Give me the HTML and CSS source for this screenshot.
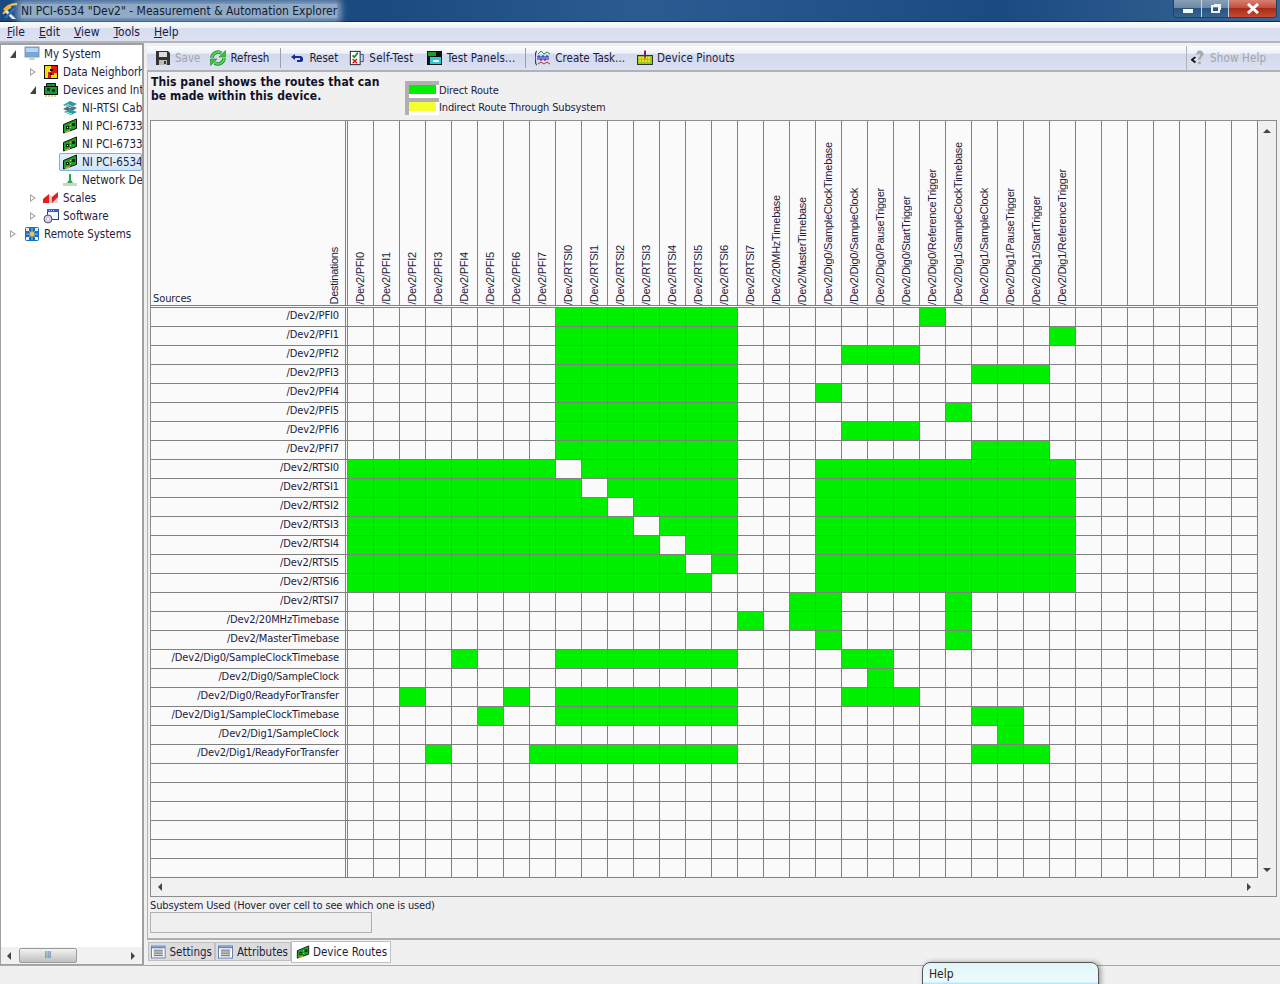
FILE: index.html
```html
<!DOCTYPE html>
<html lang="en">
<head>
<meta charset="UTF-8" />
<title>NI PCI-6534 "Dev2" - Measurement &amp; Automation Explorer</title>
<link rel="stylesheet" href="styles.css">
</head>
<body>
<svg class="defs" width="0" height="0">
  <symbol id="i-card" viewBox="0 0 16 16">
    <path d="M1.500 15V6.500L14.500 1v9.500z" fill="#17a02c" stroke="#111"/>
    <path d="M3 14.500l5-2" stroke="#e0a020" stroke-width="1.600"/>
    <path d="M4 8h3v3H4zM10 5h3v3h-3z" fill="#0c2c10"/>
    <path d="M8 9h1v1H8zM8 6h1v1H8zM5 9h1v1H5z" fill="#f0e020"/>
  </symbol>
</svg>

<div class="titlebar">
  <svg class="app-icon" width="18" height="18" viewBox="0 0 18 18">
    <path d="M2 8C5 4 9 2 15 2" stroke="#f0b840" stroke-width="2.500" fill="none"/>
    <path d="M1 12C4 8 6 6 9 5" stroke="#f0b840" stroke-width="2" fill="none"/>
    <path d="M5 8l9 9h-4L3 10z" fill="#dfe8f2"/>
    <path d="M11 6L2 16h3l8-9z" fill="#2f6fb0"/>
  </svg>
  <span class="title-text">NI PCI-6534 "Dev2" - Measurement &amp; Automation Explorer</span>
  <div class="win-btns">
    <div class="win-btn win-min"><span class="glyph-min"></span></div>
    <div class="win-btn"><span class="glyph-max"></span></div>
    <div class="win-btn win-close">
      <svg width="14" height="11" viewBox="0 0 14 11"><path d="M2 1l10 9M12 1 2 10" stroke="#fff" stroke-width="3"/></svg>
    </div>
  </div>
</div>

<div class="menubar">
  <span><u>F</u>ile</span>
  <span><u>E</u>dit</span>
  <span><u>V</u>iew</span>
  <span><u>T</u>ools</span>
  <span><u>H</u>elp</span>
</div>

<div class="main">
  <div class="tree-pane">
    <div class="tree">
      <div class="node lvl0"><span class="tw open"></span>
        <svg class="ico" viewBox="0 0 16 16"><rect x="1" y="1" width="14" height="10" fill="#6ea8dc" stroke="#8a9aaa"/><path d="M2 2h12v4H2z" fill="#b4d8f4"/><path d="M5 14h6l-1-3H6z" fill="#c8ced4"/></svg>
        My System</div>
      <div class="node lvl1"><span class="tw closed"></span>
        <svg class="ico" viewBox="0 0 16 16"><rect x="1.500" y="1.500" width="13" height="13" fill="#f6e000" stroke="#111"/><path d="M8 2h6v7h-3v2H8v3H5V8h3z" fill="#e01818"/><path d="M7 5h3v2H7zM7 9h2v2H7z" fill="#111"/></svg>
        Data Neighborhood</div>
      <div class="node lvl1"><span class="tw open"></span>
        <svg class="ico" viewBox="0 0 16 16"><path d="M3.500 1.500h9v3h-9z" fill="#1a9a30" stroke="#111"/><rect x="1.500" y="4.500" width="13" height="8" fill="#1a9a30" stroke="#111"/><path d="M3 13v2M6 13v2M9 13v2M12 13v2" stroke="#d0a020"/><path d="M4 6h3v3H4zM9 7h3v3H9z" fill="#0b3a15"/></svg>
        Devices and Interfaces</div>
      <div class="node lvl2">
        <svg class="ico" viewBox="0 0 16 16"><path d="M1 5l7-4 7 3-7 4z" fill="#2a9aa8"/><path d="M1 9l7-4 7 3-7 4z" fill="#5a6a78"/><path d="M2 12l6-3 7 3-6 3z" fill="#2a9aa8"/><path d="M3 5l6 3M5 4l6 3M4 12l6 2" stroke="#cfe" stroke-width=".8"/></svg>
        NI-RTSI Cable</div>
      <div class="node lvl2"><svg class="ico"><use href="#i-card"/></svg>NI PCI-6733</div>
      <div class="node lvl2"><svg class="ico"><use href="#i-card"/></svg>NI PCI-6733</div>
      <div class="node lvl2 selected"><svg class="ico"><use href="#i-card"/></svg>NI PCI-6534</div>
      <div class="node lvl2">
        <svg class="ico" viewBox="0 0 16 16"><path d="M7 2h2v8H7z" fill="#28a848"/><path d="M1 11h14v3H1z" fill="#c9d6d0"/><path d="M5 11l2-3h2l2 3z" fill="#28a848"/></svg>
        Network Devices</div>
      <div class="node lvl1"><span class="tw closed"></span>
        <svg class="ico" viewBox="0 0 16 16"><path d="M0 9l6-5v9H0z" fill="#e02020"/><path d="M6 13V4l3 3v6z" fill="#c8c8c8"/><path d="M9 7l6-5v11H9z" fill="#e02020"/><path d="M9 13l6-6v6z" fill="#d8d8d8"/></svg>
        Scales</div>
      <div class="node lvl1"><span class="tw closed"></span>
        <svg class="ico" viewBox="0 0 16 16"><rect x="4.500" y="1.500" width="11" height="10" fill="#f4f8ff" stroke="#27408b"/><path d="M4 1h12v3H4z" fill="#2f5fc0"/><path d="M6 2h1v1H6zM8 2h1v1H8zM10 2h1v1h-1z" fill="#f0e060"/><circle cx="5" cy="11" r="4" fill="#d8c8f0" stroke="#555"/><circle cx="5" cy="11" r="1" fill="#fff"/></svg>
        Software</div>
      <div class="node lvl0"><span class="tw closed"></span>
        <svg class="ico" viewBox="0 0 16 16"><rect x="1" y="1" width="14" height="14" rx="2" fill="#1a6fc0"/><path d="M3 3l10 10M13 3 3 13M8 2v12M2 8h12" stroke="#9ad"/><circle cx="8" cy="8" r="2.500" fill="#f0c040"/><path d="M2 2h3v3H2zM11 2h3v3h-3zM2 11h3v3H2zM11 11h3v3h-3z" fill="#e8f0f8"/></svg>
        Remote Systems</div>
    </div>
    <div class="hscroll tree-scroll">
      <span class="arrow-left"></span>
      <div class="thumb"><span>III</span></div>
      <span class="arrow-right"></span>
    </div>
  </div>

  <div class="content">
    <div class="toolbar-row">
      <div class="toolbar">
        <div class="tool tool-save disabled">
          <svg class="ico" viewBox="0 0 16 16"><path d="M1 1h12l2 2v12H1z" fill="#333"/><path d="M4 2h8v5H4z" fill="#ddd"/><path d="M4 10h8v5H4z" fill="#bbb"/><path d="M9 11h2v3H9z" fill="#333"/></svg>
          Save</div>
        <div class="tool">
          <svg class="ico" viewBox="0 0 16 16" fill="none"><path d="M2 8A6 6 0 0 1 11.500 3.200" stroke="#1b8a22" stroke-width="3.400"/><path d="M14 8A6 6 0 0 1 4.500 12.800" stroke="#1b8a22" stroke-width="3.400"/><path d="M2 8A6 6 0 0 1 11.500 3.200" stroke="#52d852" stroke-width="1.800"/><path d="M14 8A6 6 0 0 1 4.500 12.800" stroke="#52d852" stroke-width="1.800"/><path d="M15.500 .5v6.500H9zM.5 15.500V9H7z" fill="#3cc03c" stroke="#1b8a22" stroke-width=".6"/></svg>
          Refresh</div>
        <div class="sep"></div>
        <div class="tool tool-reset">
          <svg class="ico" viewBox="2 0 16 16"><path d="M2 7l4-3v2h5a3 3 0 0 1 3 3v1a2 2 0 0 1-2 2H8v-2h3V8H6v2z" fill="#1a2a9a"/></svg>
          Reset</div>
        <div class="tool tool-self">
          <svg class="ico" viewBox="0 0 16 18"><rect x=".5" y="1.500" width="11" height="15" fill="#fff" stroke="#111"/><path d="M3 6l2 2 4-5" stroke="#0a9a20" stroke-width="2" fill="none"/><path d="M3 10l5 5M8 10l-5 5" stroke="#e01010" stroke-width="1.600"/><path d="M12 5h3v8h-3" stroke="#1a3ad0" fill="none"/></svg>
          Self-Test</div>
        <div class="tool tool-panels">
          <svg class="ico" viewBox="0 0 16 16"><rect x="0" y="1" width="15" height="14" fill="#111"/><rect x="1" y="2" width="8" height="4" fill="#1a9a30"/><rect x="3" y="7" width="11" height="7" fill="#30c8d8"/><rect x="6" y="10" width="6" height="2" fill="#eee"/></svg>
          Test Panels...</div>
        <div class="sep sep-tight"></div>
        <div class="tool tool-task">
          <svg class="ico" viewBox="0 0 16 16"><path d="M2 1C0 1 1 7 0 8c1 1 0 7 2 7" stroke="#111" fill="none"/><path d="M3 4l3-3 3 3 3-2 3 2" stroke="#1a9a30" fill="none"/><path d="M3 10V6h2v4h2V6h2v4h2V6h2v4" stroke="#101ab0" fill="none"/><path d="M3 14l3-2 3 2 3-2 3 2" stroke="#d02020" fill="none"/></svg>
          Create Task...</div>
        <div class="tool tool-pinouts">
          <svg class="ico" viewBox="0 0 16 16"><rect x=".5" y="5.500" width="15" height="9" fill="#9ac820" stroke="#333"/><path d="M2 8h12M2 11h12" stroke="#f0e020" stroke-width="2" stroke-dasharray="2 1"/><path d="M7 1h2v6H7z" fill="#1a2ad0"/><path d="M8 0v9" stroke="#e01010"/></svg>
          Device Pinouts</div>
      </div>
      <div class="toolbar help-tool">
        <svg class="ico" viewBox="0 0 18 18"><path d="M6 5a4 4 0 1 1 6 3c-1 1-1 2-1 3H8c0-3 2-3 2-5s-1-2-2-1z" fill="#aaa"/><rect x="8" y="13" width="3" height="3" fill="#aaa"/><path d="M5 8 1 11l4 3" stroke="#111" stroke-width="2" fill="none"/></svg>
        Show Help
      </div>
    </div>

    <div class="panel">
      <div class="intro">
        <p class="intro-text">This panel shows the routes that can be made within this device.</p>
        <div class="legend">
          <div class="legend-row"><span class="swatch"><i class="sw-green"></i></span>Direct Route</div>
          <div class="legend-row"><span class="swatch"><i class="sw-yellow"></i></span>Indirect Route Through Subsystem</div>
        </div>
      </div>

      <div class="matrix-frame">
        <div class="matrix-top">
          <div class="matrix" id="matrix"></div>
          <div class="vscroll"><span class="arrow-up"></span><span class="arrow-down"></span></div>
        </div>
        <div class="hscroll matrix-scroll">
          <span class="arrow-left"></span>
          <span class="arrow-right"></span>
        </div>
      </div>

      <div class="subsystem">Subsystem Used (Hover over cell to see which one is used)</div>
      <div class="subsystem-box"></div>
    </div>

    <div class="tabs">
      <div class="tab tab-settings"><svg class="tab-ico" viewBox="0 0 16 14"><rect x=".5" y=".5" width="15" height="13" fill="#fff" stroke="#5a7ab0"/><path d="M1 1h14v2H1z" fill="#5a8ad8"/><path d="M3 5h10M3 7h10M3 9h10M3 11h10" stroke="#555"/></svg>Settings</div>
      <div class="tab tab-attr"><svg class="tab-ico" viewBox="0 0 16 14"><rect x=".5" y=".5" width="15" height="13" fill="#fff" stroke="#5a7ab0"/><path d="M1 1h14v2H1z" fill="#5a8ad8"/><path d="M3 5h10M3 7h10M3 9h10M3 11h10" stroke="#555"/></svg>Attributes</div>
      <div class="tab active"><svg class="ico"><use href="#i-card"/></svg>Device Routes</div>
    </div>
  </div>
</div>

<div class="statusbar">
  <div class="help-popup">Help</div>
</div>

<script src="script.js"></script>
</body>
</html>
```

FILE: styles.css
```css
* { box-sizing: border-box; }
html, body { margin: 0; height: 984px; overflow: hidden; }
body { font-family: "DejaVu Sans Condensed", "Noto Sans", sans-serif; font-size: 11.500px; color: #1c1c40; background: #f0f0f0; display: flex; flex-direction: column; }
.defs { position: absolute; }
.ico { width: 16px; height: 16px; flex: none; }

/* title bar */
.titlebar { height: 22px; flex: none; display: flex; align-items: center; background: linear-gradient(90deg, #1b4a80 0%, #1a4a80 30%, #2a5c92 50%, #1a4a82 78%, #3a6694 100%); border-bottom: 1px solid #0e2a48; padding-left: 2px; position: relative; }
.app-icon { flex: none; }
.title-text { margin-left: 1px; font-size: 12px; color: #10202f; background: rgba(225,235,245,.6); box-shadow: 0 0 7px 4px rgba(225,235,245,.55); line-height: 14px; }
.win-btns { margin-left: auto; margin-right: 3px; display: flex; height: 18px; align-self: flex-start; border: 1px solid #24405e; border-top: none; border-radius: 0 0 4px 4px; overflow: hidden; }
.win-btn { width: 27px; display: flex; align-items: center; justify-content: center; background: linear-gradient(#8aa0b8, #6e88a4 45%, #2a5480 50%, #3a6490); border-right: 1px solid #c8d4e0; }
.win-min { width: 28px; }
.win-close { width: 47px; border-right: none; background: linear-gradient(#d88070, #c05040 45%, #a82a18 50%, #c84a30); }
.glyph-min { width: 10px; height: 4px; background: #f4f6f8; margin-top: 4px; }
.glyph-max { width: 9px; height: 8px; border: 2px solid #eef2f6; box-shadow: 2px -2px 0 -1px #eef2f6; }

/* menu */
.menubar { height: 21px; flex: none; display: flex; align-items: center; padding-left: 7px; gap: 14px; font-size: 12px; background: linear-gradient(#fbfcfe 0, #eef1f8 30%, #d8deef 32%, #dbe1f1 100%); border-bottom: 2px solid #b4b6bc; color: #1c1c3c; }

/* main split */
.main { flex: none; height: 923px; display: flex; border-bottom: 1px solid #a8a8a8; }
.tree-pane { width: 144px; flex: none; background: #fff; border: 1px solid #a0a0a0; border-width: 2px 2px 1px 1px; display: flex; flex-direction: column; }
.tree { flex: 1; overflow: hidden; }
.node { height: 18px; display: flex; align-items: center; white-space: nowrap; overflow: hidden; color: #1e1e3e; }
.node .ico { margin-right: 4px; }
.lvl0 { padding-left: 9px; }
.lvl1 { padding-left: 29px; }
.lvl2 { padding-left: 61px; }
.tw { width: 6px; height: 8px; flex: none; margin-right: 8px; position: relative; }
.lvl1 .tw { margin-right: 7px; }
.tw.open { background: #444; clip-path: polygon(100% 0, 100% 100%, 0 100%); }
.tw.closed { background: #a6a6a6; clip-path: polygon(0 0, 100% 50%, 0 100%); }
.tw.closed::after { content: ""; position: absolute; left: 1px; top: 2px; width: 3px; height: 4px; background: #fff; clip-path: polygon(0 0, 100% 50%, 0 100%); }
.node.selected { background: linear-gradient(#e6f1fc, #cfe4fa); outline: 1px solid #84acdd; outline-offset: -1px; margin-left: 58px; padding-left: 3px; border-radius: 2px; }

/* scroll bars */
.hscroll { display: flex; align-items: center; justify-content: space-between; background: #f1f1f1; }
.tree-scroll { height: 17px; flex: none; padding: 0 7px 0 6px; position: relative; }
.thumb { position: absolute; left: 18px; top: 1px; width: 58px; height: 15px; border: 1px solid #9a9a9a; border-radius: 2px; background: linear-gradient(#f2f2f2, #d8d8d8 50%, #c0c0c0); display: flex; align-items: center; justify-content: center; font-size: 8px; color: #555; }
.arrow-left, .arrow-right, .arrow-up, .arrow-down { display: block; width: 0; height: 0; border: 4px solid transparent; }
.arrow-left { border-right-color: #444; border-left-width: 0; }
.arrow-right { border-left-color: #444; border-right-width: 0; }
.arrow-up { border-bottom-color: #444; border-top-width: 0; }
.arrow-down { border-top-color: #444; border-bottom-width: 0; }

/* toolbar */
.content { flex: 1; min-width: 0; display: flex; flex-direction: column; padding: 3px 0 0 3px; }
.toolbar-row { display: flex; height: 26px; flex: none; border-bottom: 2px solid #b0b2b8; }
.toolbar { display: flex; align-items: center; flex: 1; padding-left: 8px; background: linear-gradient(#fbfcfe 0, #eef1f8 30%, #d3d9ec 34%, #dbe1f1 100%); color: #1c1c40; }
.help-tool { flex: none; width: 94px; padding-left: 4px; border-left: 1px solid #b0b2b8; color: #a4a4a8; gap: 3px; letter-spacing: .15px; }
.tool { display: flex; align-items: center; gap: 4px; margin-right: 11px; white-space: nowrap; }
.tool.disabled { color: #a4a4a8; }
.tool-save { margin-right: 10px; }
.tool-reset { gap: 2px; }
.tool-self { letter-spacing: .3px; margin-right: 13px; }
.tool-panels { letter-spacing: .15px; margin-right: 10px; }
.tool-task { margin-right: 12px; }
.tool-pinouts { letter-spacing: .1px; }
.sep { width: 1px; height: 20px; background: #9ca0ac; margin-right: 10px; }
.sep-tight { margin-right: 9px; }

/* panel */
.panel { flex: none; height: 868px; display: flex; flex-direction: column; border-left: 1px solid #b0b0b0; border-bottom: 2px solid #aeaeae; padding-left: 2px; }
.intro { height: 48px; flex: none; display: flex; }
.intro-text { margin: 3px 0 0 1px; width: 254px; padding-right: 18px; font-weight: 700; font-size: 12px; letter-spacing: .08px; line-height: 14px; color: #101028; }
.legend { margin-top: 10px; display: flex; flex-direction: column; font-size: 11px; letter-spacing: -.15px; }
.legend-row { display: flex; align-items: center; height: 17px; }
.swatch { width: 34px; height: 17px; flex: none; align-self: flex-start; margin-top: -1px; display: flex; padding: 0 3px 4px 0; background: #fff; border-top: 4px solid #b0b0b0; border-left: 4px solid #b0b0b0; }
.swatch i { display: block; width: 27px; height: 9px; }
.sw-green { background: #00f000; }
.sw-yellow { background: #f4ff30; }

/* routes matrix */
.matrix-frame { flex: none; width: 1127px; height: 777px; border: 1px solid #8c8c8c; background: #efefef; }
.matrix-top { display: flex; height: 757px; }
.matrix { flex: none; width: 1107px; background: #fafafa; }
.row { display: flex; height: 19px; border-bottom: 1px solid #808080; }
.row.head { height: 185px; box-shadow: 0 1px 0 #fafafa, 0 2px 0 #808080; margin-bottom: 2px; }
.cell-src { width: 195px; flex: none; border-right: 1px solid #808080; margin-right: 2px; box-shadow: 1px 0 0 #fafafa, 2px 0 0 #808080; padding-right: 6px; text-align: right; font-size: 11px; letter-spacing: -.1px; line-height: 15px; white-space: nowrap; color: #1c1c40; }
.head .cell-src { position: relative; text-align: left; padding: 0; }
.src-title { position: absolute; left: 2px; bottom: -1px; line-height: 14px; }
.dest-title { position: absolute; right: 5px; bottom: 0; writing-mode: vertical-rl; transform: rotate(180deg); font-family: "Liberation Sans", Arial, sans-serif; font-size: 11px; letter-spacing: -.25px; line-height: 12px; }
.cell { width: 26px; flex: none; border-right: 1px solid #808080; }
.cell.on { background: #00f000; }
.cell.off-head { position: relative; }
.vlabel { position: absolute; left: 6px; bottom: 0; writing-mode: vertical-rl; transform: rotate(180deg); white-space: nowrap; font-family: "Liberation Sans", Arial, sans-serif; font-size: 11px; letter-spacing: -.25px; line-height: 12px; color: #1c1c40; }
.vscroll { flex: 1; display: flex; flex-direction: column; justify-content: space-between; align-items: center; padding: 8px 0 6px; background: #f0f0f0; }
.matrix-scroll { height: 18px; padding: 0 6px 0 7px; width: 1106px; }

.subsystem { height: 15px; line-height: 18px; font-size: 11px; letter-spacing: -.15px; color: #1c1c40; }
.subsystem-box { width: 222px; height: 21px; border: 1px solid #b0b0b0; background: #efefef; }

/* tabs */
.tabs { display: flex; align-items: flex-start; padding-top: 1px; padding-left: 1px; flex: none; }
.tab { height: 19px; margin-top: 1px; display: flex; align-items: center; gap: 4px; padding: 0 2px; background: #dcdcdc; border: 1px solid #c0c0c0; color: #1c1c40; white-space: nowrap; }
.tab.active { height: 22px; margin-top: 0; background: #fff; padding: 0 3px 0 4px; gap: 3px; }
.tab.active .ico { width: 14px; height: 14px; }
.tab-settings { width: 67px; }
.tab-attr { width: 76px; }
.tab-ico { width: 16px; height: 14px; }

/* status */
.statusbar { flex: 1; position: relative; }
.help-popup { position: absolute; left: 922px; top: -4px; width: 177px; height: 30px; padding: 4px 0 0 6px; font-size: 12px; border: 1px solid #555; border-radius: 8px 8px 0 0; box-shadow: 2px 0 5px rgba(0,0,0,.35); background: linear-gradient(#e2f6f9 0, #ecfafc 19px, #b9e6f9 20px); color: #30201c; }
```

FILE: script.js
```js
// Routing table of the device: source -> list of [from, to] column ranges
const COLS = ['PFI0','PFI1','PFI2','PFI3','PFI4','PFI5','PFI6','PFI7',
  'RTSI0','RTSI1','RTSI2','RTSI3','RTSI4','RTSI5','RTSI6','RTSI7',
  '20MHzTimebase','MasterTimebase',
  'Dig0/SampleClockTimebase','Dig0/SampleClock','Dig0/PauseTrigger','Dig0/StartTrigger','Dig0/ReferenceTrigger',
  'Dig1/SampleClockTimebase','Dig1/SampleClock','Dig1/PauseTrigger','Dig1/StartTrigger','Dig1/ReferenceTrigger'];
const TOTAL_COLS = 35;
const TOTAL_ROWS = 30;
const RTSI = [8, 14];

const ROUTES = [
  ['PFI0', [RTSI, [22, 22]]],
  ['PFI1', [RTSI, [27, 27]]],
  ['PFI2', [RTSI, [19, 21]]],
  ['PFI3', [RTSI, [24, 26]]],
  ['PFI4', [RTSI, [18, 18]]],
  ['PFI5', [RTSI, [23, 23]]],
  ['PFI6', [RTSI, [19, 21]]],
  ['PFI7', [RTSI, [24, 26]]],
  ['RTSI0', [[0, 7], [9, 14], [18, 27]]],
  ['RTSI1', [[0, 8], [10, 14], [18, 27]]],
  ['RTSI2', [[0, 9], [11, 14], [18, 27]]],
  ['RTSI3', [[0, 10], [12, 14], [18, 27]]],
  ['RTSI4', [[0, 11], [13, 14], [18, 27]]],
  ['RTSI5', [[0, 12], [14, 14], [18, 27]]],
  ['RTSI6', [[0, 13], [18, 27]]],
  ['RTSI7', [[17, 18], [23, 23]]],
  ['20MHzTimebase', [[15, 15], [17, 18], [23, 23]]],
  ['MasterTimebase', [[18, 18], [23, 23]]],
  ['Dig0/SampleClockTimebase', [[4, 4], RTSI, [19, 20]]],
  ['Dig0/SampleClock', [[20, 20]]],
  ['Dig0/ReadyForTransfer', [[2, 2], [6, 6], RTSI, [19, 21]]],
  ['Dig1/SampleClockTimebase', [[5, 5], RTSI, [24, 25]]],
  ['Dig1/SampleClock', [[25, 25]]],
  ['Dig1/ReadyForTransfer', [[3, 3], [7, 14], [24, 26]]]
];

function isOn(ranges, col) {
  return ranges.some(([a, b]) => col >= a && col <= b);
}

function buildMatrix() {
  let html = '<div class="row head"><div class="cell-src"><span class="src-title">Sources</span><span class="dest-title">Destinations</span></div>';
  for (let c = 0; c < TOTAL_COLS; c++) {
    const label = COLS[c] ? `<span class="vlabel">/Dev2/${COLS[c]}</span>` : '';
    html += `<div class="cell off-head">${label}</div>`;
  }
  html += '</div>';

  for (let r = 0; r < TOTAL_ROWS; r++) {
    const route = ROUTES[r];
    html += `<div class="row"><div class="cell-src">${route ? '/Dev2/' + route[0] : ''}</div>`;
    for (let c = 0; c < TOTAL_COLS; c++) {
      const on = route && isOn(route[1], c);
      html += `<div class="cell${on ? ' on' : ''}"></div>`;
    }
    html += '</div>';
  }
  document.getElementById('matrix').innerHTML = html;
}

buildMatrix();
```
